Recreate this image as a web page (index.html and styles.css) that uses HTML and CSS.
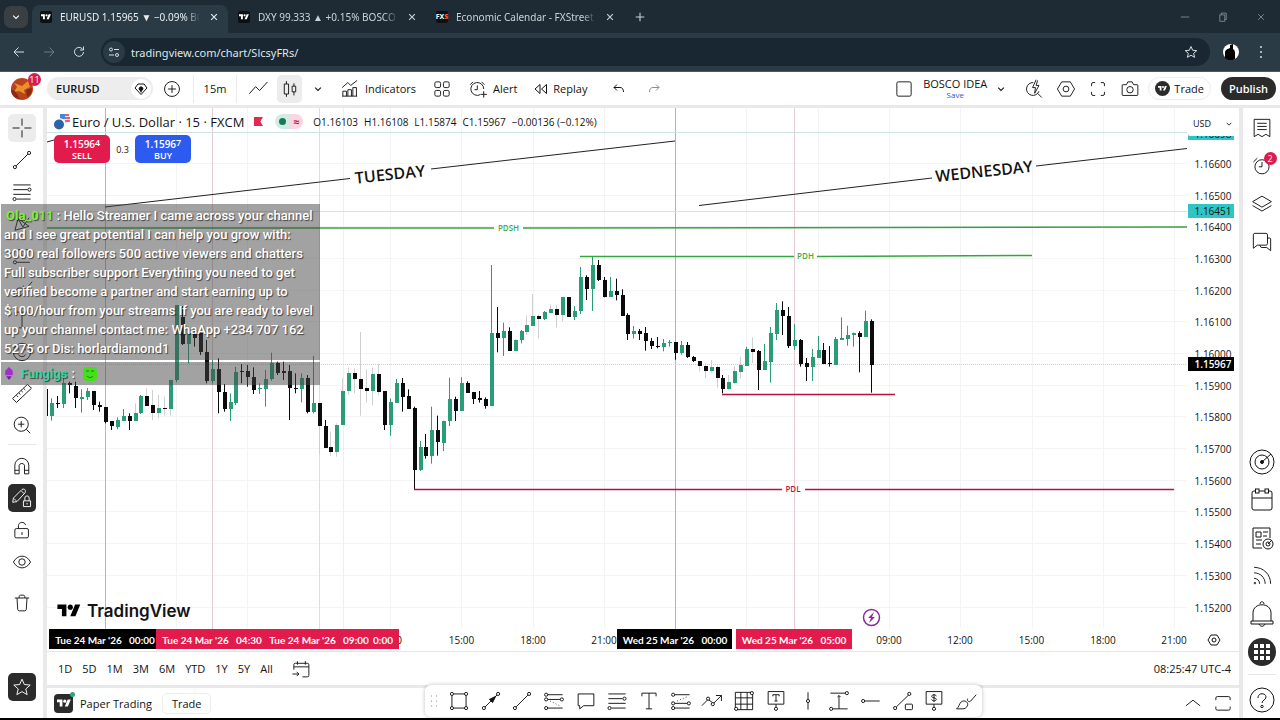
FILE: index.html
```html
<!DOCTYPE html>
<html lang="en">
<head>
    <meta charset="UTF-8">
    <meta name="viewport" content="width=device-width, initial-scale=1.0">
    <title>EURUSD 1.15965 ▼ −0.09% BOSCO IDEA</title>
    <link rel="stylesheet" href="styles.css">
</head>
<body>
    <!-- Icon sprite -->
    <svg class="sprite" aria-hidden="true">
        <symbol id="i-tv" viewBox="0 0 36 28"><path d="M14 22H7V11H0V4h14v18zM28 22h-8l7.500-18h8L28 22z" /><circle cx="20" cy="8" r="4" /></symbol>
        <symbol id="i-x" viewBox="0 0 28 28"><path d="M6 6l16 16M22 6L6 22" /></symbol>
        <symbol id="i-chev" viewBox="0 0 28 28"><path d="M6 10l8 8 8-8" /></symbol>
        <symbol id="i-up" viewBox="0 0 28 28"><path d="M4 18l10-8 10 8" /></symbol>
        <symbol id="i-plus" viewBox="0 0 28 28"><circle cx="14" cy="14" r="9.500" /><path d="M14 9v10M9 14h10" /></symbol>
        <symbol id="i-gem" viewBox="0 0 28 28"><path d="M2 12l6-8h12l6 8-12 13z" /><path d="M14 8v13M11 11h6l1 3-4 5-4-5z" fill="currentColor" /></symbol>
        <symbol id="i-line" viewBox="0 0 28 28"><path d="M3 20l8-9 5 5 10-11" /></symbol>
        <symbol id="i-candle" viewBox="0 0 28 28"><path d="M6 7h6v14H6zM9 3v4M9 21v4M17 10h5v8h-5zM19.500 6v4M19.500 18v5" /></symbol>
        <symbol id="i-ind" viewBox="0 0 28 28"><path d="M3 12l8-7 4 4 9-7M4 24v-7h5v7M11 24v-9h5v9M18 24V12h5v12M3 24h21" /></symbol>
        <symbol id="i-grid" viewBox="0 0 28 28"><rect x="4" y="4" width="8" height="8" rx="2" /><rect x="16" y="4" width="8" height="8" rx="2" /><rect x="4" y="16" width="8" height="8" rx="2" /><rect x="16" y="16" width="8" height="8" rx="2" /></symbol>
        <symbol id="i-alert" viewBox="0 0 28 28"><path d="M17 22a9 9 0 1 1 5-8M13 9v6H9M3 8l4-4M19 4l4 4M22 17v9M17.500 21.500h9" /></symbol>
        <symbol id="i-clock" viewBox="0 0 28 28"><circle cx="14" cy="15" r="9" /><path d="M14 9v6H10M3 9l5-5" /></symbol>
        <symbol id="i-replay" viewBox="0 0 28 28"><path d="M12 5v18L2 14zM25 5v18l-10-9z" /></symbol>
        <symbol id="i-undo" viewBox="0 0 28 28"><path d="M10 5l-6 6 6 6M4 11h12c5 0 7 4 7 9" /></symbol>
        <symbol id="i-redo" viewBox="0 0 28 28"><path d="M18 5l6 6-6 6M24 11H12c-5 0-7 4-7 9" /></symbol>
        <symbol id="i-square" viewBox="0 0 28 28"><rect x="4" y="4" width="20" height="20" rx="2" /></symbol>
        <symbol id="i-quick" viewBox="0 0 28 28"><path d="M13 5a9 9 0 1 0 8 12M19 20l6 6M17 1l-5 11h4l-1 8 6-11h-4l2-7" /></symbol>
        <symbol id="i-hex" viewBox="0 0 28 28"><path d="M8 4h12l6 10-6 10H8L2 14z" /><circle cx="14" cy="14" r="4" /></symbol>
        <symbol id="i-full" viewBox="0 0 28 28"><path d="M5 10V7a2 2 0 0 1 2-2h3M18 5h3a2 2 0 0 1 2 2v3M23 18v3a2 2 0 0 1-2 2h-3M10 23H7a2 2 0 0 1-2-2v-3" /></symbol>
        <symbol id="i-cam" viewBox="0 0 28 28"><path d="M4 8h5l2-4h6l2 4h5a1 1 0 0 1 1 1v13a1 1 0 0 1-1 1H4a1 1 0 0 1-1-1V9a1 1 0 0 1 1-1z" /><circle cx="14" cy="15" r="4.500" /></symbol>
        <symbol id="i-cross" viewBox="0 0 28 28"><path d="M14 2v9M14 17v9M2 14h9M17 14h9" /></symbol>
        <symbol id="i-trend" viewBox="0 0 28 28"><path d="M6.500 21.500L21.500 6.500" /><circle cx="5" cy="23" r="2" /><circle cx="23" cy="5" r="2" /></symbol>
        <symbol id="i-fib" viewBox="0 0 28 28"><path d="M3 5h22M3 11h18M3 17h22M7 23h18" /><circle cx="23.500" cy="11" r="2" /><circle cx="4.500" cy="23" r="2" /></symbol>
        <symbol id="i-pattern" viewBox="0 0 28 28"><path d="M5 22L9 7l6 11 8-12M5 22l18-5L9 7" /></symbol>
        <symbol id="i-proj" viewBox="0 0 28 28"><path d="M7 22h17" /><path d="M4 6h20M7 13h15" stroke-dasharray="3 2" /><circle cx="5" cy="22" r="2" /></symbol>
        <symbol id="i-brush" viewBox="0 0 28 28"><path d="M2 24c3-2 3-6 6-9 3-2 7-1 8 2s-2 7-6 7zM16 11c-1 3 2 5 4 3l7-8" /></symbol>
        <symbol id="i-text" viewBox="0 0 28 28"><path d="M5 8V4h18v4M14 4v20M10 24h8" /></symbol>
        <symbol id="i-smile" viewBox="0 0 28 28"><circle cx="14" cy="14" r="11" /><path d="M10 10v2M18 10v2M9 17c3 4 7 4 10 0" /></symbol>
        <symbol id="i-ruler" viewBox="0 0 28 28"><path d="M2 21L21 3l5 5L7 26zM7 17l2 2M10 14l2 2M13 11l2 2M16 8l2 2" /></symbol>
        <symbol id="i-zoom" viewBox="0 0 28 28"><circle cx="13" cy="13" r="9" /><path d="M19.500 19.500l5 5M13 9v8M9 13h8" /></symbol>
        <symbol id="i-magnet" viewBox="0 0 28 28"><path d="M4 25V13a9.500 9.500 0 0 1 19.500 0v12h-6V13a4 4 0 0 0-7.500 0v12zM4 20h6M17.500 20h6" /></symbol>
        <symbol id="i-penlock" viewBox="0 0 28 28"><path d="M1 20l1-6L14 2c4-2 6 2 4 5L7 19zM3 15l3 3M13 4l4 4M16 18h10v8H16zM18 18v-4a3 3 0 0 1 6 0v4M21 21v2" /></symbol>
        <symbol id="i-unlock" viewBox="0 0 28 28"><rect x="4" y="12" width="19" height="13" rx="2" /><path d="M9 12V8c0-6 9-6 10-1M14 17v4" /></symbol>
        <symbol id="i-eye" viewBox="0 0 28 28"><path d="M2 14C8 3 20 3 26 14 20 25 8 25 2 14z" /><circle cx="14" cy="14" r="4.500" /></symbol>
        <symbol id="i-trash" viewBox="0 0 28 28"><path d="M4 7h20M10 7V5c0-1 1-2 2-2h4c1 0 2 1 2 2v2M7 7l1 16c0 1 1 2 2 2h8c1 0 2-1 2-2l1-16" /></symbol>
        <symbol id="i-star" viewBox="0 0 28 28"><path d="M14 3l3.300 7.500 8.200.8-6.200 5.400 1.900 8-7.200-4.200-7.200 4.200 1.900-8-6.200-5.400 8.200-.8z" /></symbol>
        <symbol id="i-watch" viewBox="0 0 28 28"><path d="M4 3h20v22l-5-3-5 3-5-3-5 3zM8 8h12M8 12h12M8 16h12" /></symbol>
        <symbol id="i-layers" viewBox="0 0 28 28"><path d="M14 4l12 7-12 7-12-7zM2 16l12 7 12-7" /></symbol>
        <symbol id="i-chat" viewBox="0 0 28 28"><path d="M4 3h15a2 2 0 0 1 2 2v11a2 2 0 0 1-2 2H8l-5 4V5a2 2 0 0 1 1-2zM21 9h3a1 1 0 0 1 1 1v15l-5-4h-7l-2-3" /></symbol>
        <symbol id="i-target" viewBox="0 0 28 28"><circle cx="14" cy="14" r="12" /><circle cx="14" cy="14" r="7" /><circle cx="14" cy="14" r="1.500" fill="currentColor" /><path d="M14 14l9-8" /></symbol>
        <symbol id="i-cal" viewBox="0 0 28 28"><rect x="4" y="5" width="20" height="19" rx="2" /><path d="M4 12h20" /><rect x="7.500" y="3" width="3.500" height="4" fill="#fff" /><rect x="17" y="3" width="3.500" height="4" fill="#fff" /></symbol>
        <symbol id="i-news" viewBox="0 0 28 28"><path d="M14 24H5V4h17v10M8 8h5v5H8zM15 8h5M15 12h4M8 16h6M8 20h5" /><circle cx="20" cy="20" r="5" /><circle cx="20" cy="20" r="2" /><path d="M20 20l4-4" /></symbol>
        <symbol id="i-rss" viewBox="0 0 28 28"><path d="M4 3c12 0 21 9 21 21M4 10c8 0 14 6 14 14M4 17c4 0 7 3 7 7" /><circle cx="5" cy="23" r="1" /></symbol>
        <symbol id="i-bell" viewBox="0 0 28 28"><path d="M3 21h22v3H3zM5 21v-8c0-11 18-11 18 0v8M12 4c0-3 4-3 4 0M11 24c1 3 5 3 6 0" /></symbol>
        <symbol id="i-apps" viewBox="0 0 28 28"><path d="M6 6h4v4H6zM12 6h4v4h-4zM18 6h4v4h-4zM6 12h4v4H6zM12 12h4v4h-4zM18 12h4v4h-4zM6 18h4v4H6zM12 18h4v4h-4zM18 18h4v4h-4z" fill="currentColor" stroke="none" /></symbol>
        <symbol id="i-help" viewBox="0 0 28 28"><circle cx="14" cy="14" r="12" /><path d="M10 12c0-6 8-5 8-1 0 3-4 3-4 6" /><circle cx="14" cy="20.500" r="1.200" /></symbol>
        <symbol id="i-goto" viewBox="0 0 28 28"><path d="M4 15V8a2 2 0 0 1 2-2h17a2 2 0 0 1 2 2v15a2 2 0 0 1-2 2h-7M4 11h21M9 3v5M20 3v5M2 21h9M8 18l3 3-3 3" /></symbol>
        <symbol id="i-rect" viewBox="0 0 28 28"><path d="M6 5h16M6 23h16M5 6v16M23 6v16" /><circle cx="5" cy="5" r="2" fill="#fff" /><circle cx="23" cy="5" r="2" fill="#fff" /><circle cx="5" cy="23" r="2" fill="#fff" /><circle cx="23" cy="23" r="2" fill="#fff" /></symbol>
        <symbol id="i-arrow" viewBox="0 0 28 28"><path d="M6 22L22 6" /><path d="M12 12l8-4-4 8z" fill="currentColor" /><circle cx="5" cy="23" r="2" fill="#fff" /><circle cx="23" cy="5" r="2" fill="#fff" /></symbol>
        <symbol id="i-long" viewBox="0 0 28 28"><path d="M5 6h20M5 12h18M5 23h20" /><path d="M9 14l14 7" stroke-dasharray="1 3" /><circle cx="4" cy="6" r="2" fill="#fff" /><circle cx="4" cy="12" r="2" fill="#fff" /><circle cx="24" cy="12" r="2" fill="#fff" /><circle cx="4" cy="23" r="2" fill="#fff" /></symbol>
        <symbol id="i-short" viewBox="0 0 28 28"><path d="M5 6h20M5 17h18M5 23h20" /><path d="M9 14l14-6" stroke-dasharray="1 3" /><circle cx="4" cy="6" r="2" fill="#fff" /><circle cx="4" cy="17" r="2" fill="#fff" /><circle cx="24" cy="17" r="2" fill="#fff" /><circle cx="4" cy="23" r="2" fill="#fff" /></symbol>
        <symbol id="i-bubble" viewBox="0 0 28 28"><path d="M4 5h20v15H11l-5 4v-4H4z" /></symbol>
        <symbol id="i-path" viewBox="0 0 28 28"><path d="M1 20l8-8 7 5 10-10M19 7h7v7" /><circle cx="9" cy="11" r="2" fill="#fff" /><circle cx="15" cy="18" r="2" fill="#fff" /></symbol>
        <symbol id="i-table" viewBox="0 0 28 28"><path d="M3 3h22v22H3zM10 3v22M18 3v22M3 10h22M3 18h22" /><circle cx="24" cy="4" r="2" fill="#fff" /><circle cx="4" cy="24" r="2" fill="#fff" /></symbol>
        <symbol id="i-note" viewBox="0 0 28 28"><path d="M4 2h20v16H4zM10 8V6h8v2M14 6v8M12 14h4M14 18v4" /><circle cx="14" cy="24" r="2" /></symbol>
        <symbol id="i-vline" viewBox="0 0 28 28"><path d="M14 3v9M14 16v9" /><circle cx="14" cy="14" r="2" /></symbol>
        <symbol id="i-range" viewBox="0 0 28 28"><path d="M3 4h20M6 24h19M14 24V7M12 9l2-2 2 2" /><circle cx="24" cy="4" r="2" fill="#fff" /><circle cx="4" cy="24" r="2" fill="#fff" /></symbol>
        <symbol id="i-ray" viewBox="0 0 28 28"><path d="M6 14h19" /><circle cx="4" cy="14" r="2" /></symbol>
        <symbol id="i-trendsq" viewBox="0 0 28 28"><path d="M5.500 21.500L21 6.500" /><circle cx="4" cy="23" r="2" /><circle cx="22" cy="5" r="2" /><rect x="17" y="18" width="9" height="7" rx="1" /></symbol>
        <symbol id="i-price" viewBox="0 0 28 28"><path d="M4 2h20v16H4zM17 8c-1-3-6-2-6 0 0 3 6 1 6 4 0 2-5 3-6 0M14 5v10M14 18v4" /><circle cx="14" cy="24" r="2" /></symbol>
        <symbol id="i-max" viewBox="0 0 28 28"><path d="M4 10V7a2 2 0 0 1 2-2h16a2 2 0 0 1 2 2v3M4 19v3a2 2 0 0 0 2 2h16a2 2 0 0 0 2-2v-3" /></symbol>
    </svg>

    <!-- Browser -->
    <div class="tab-strip">
        <button class="tab-search" aria-label="Search tabs"><svg class="icon tiny"><use href="#i-chev" /></svg></button>
        <div class="tab active">
            <span class="favicon"><svg><use href="#i-tv" /></svg></span>
            <span class="tab-title">EURUSD 1.15965 ▼ −0.09% BOSCO</span>
            <button class="tab-close" aria-label="Close tab"><svg class="icon tiny"><use href="#i-x" /></svg></button>
        </div>
        <div class="tab">
            <span class="favicon"><svg><use href="#i-tv" /></svg></span>
            <span class="tab-title">DXY 99.333 ▲ +0.15% BOSCO I</span>
            <button class="tab-close" aria-label="Close tab"><svg class="icon tiny"><use href="#i-x" /></svg></button>
        </div>
        <div class="tab">
            <span class="favicon fxs">FX<b>S</b></span>
            <span class="tab-title">Economic Calendar - FXStreet</span>
            <button class="tab-close" aria-label="Close tab"><svg class="icon tiny"><use href="#i-x" /></svg></button>
        </div>
        <button class="new-tab" aria-label="New tab"><svg class="icon tiny" viewBox="0 0 28 28"><path d="M14 2v24M2 14h24" /></svg></button>
        <div class="window-buttons">
            <button aria-label="Minimize"><svg class="icon tiny" viewBox="0 0 28 28"><path d="M2 14h24" /></svg></button>
            <button aria-label="Restore"><svg class="icon tiny" viewBox="0 0 28 28"><path d="M5 8h14v18H5zM9 8V3h14v18h-4" /></svg></button>
            <button aria-label="Close"><svg class="icon tiny"><use href="#i-x" /></svg></button>
        </div>
    </div>
    <div class="address-bar">
        <button aria-label="Back"><svg class="icon small" viewBox="0 0 28 28"><path d="M24 14H4M13 5l-9 9 9 9" /></svg></button>
        <button class="off" aria-label="Forward"><svg class="icon small" viewBox="0 0 28 28"><path d="M4 14h20M15 5l9 9-9 9" /></svg></button>
        <button aria-label="Reload"><svg class="icon small" viewBox="0 0 28 28"><path d="M23 14a9 9 0 1 1-3-7l3 3M23 3v7h-7" /></svg></button>
        <div class="url-box">
            <span class="site-info"><svg class="icon small" viewBox="0 0 28 28"><circle cx="8" cy="9" r="3" /><path d="M14 9h10M4 20h10" /><circle cx="20" cy="20" r="3" /></svg></span>
            <input class="url" type="text" aria-label="Address" value="tradingview.com/chart/SlcsyFRs/">
            <button aria-label="Bookmark"><svg class="icon small"><use href="#i-star" /></svg></button>
        </div>
        <button class="profile" aria-label="Profile"><svg viewBox="0 0 16 16"><circle cx="8" cy="8" r="8" fill="#fff" /><path d="M2 14V8c1-3 3-3 5-4V1l3-1v5c2 1 2 3 2 5v5c-3 2-7 2-10-1z" fill="#000" /></svg></button>
        <button class="menu" aria-label="Menu"><svg viewBox="0 0 4 14"><circle cx="2" cy="2" r="1" /><circle cx="2" cy="7" r="1" /><circle cx="2" cy="12" r="1" /></svg></button>
    </div>

    <!-- Top toolbar -->
    <header class="top-bar">
        <button class="avatar" aria-label="Account"><svg viewBox="0 0 22 22"><circle cx="11" cy="11" r="11" fill="#b8431c" /><path d="M3 5l8 3 6-5 2 6-6 3 1 4-6-3-5 1 3-5z" fill="#e8902c" /><path d="M0 12c5-1 6 5 9 9-5 0-9-4-9-9zM15 12l6-2c0 5-2 8-5 9z" fill="#8a2a14" /></svg><span class="badge">11</span></button>
        <button class="symbol">EURUSD <span class="gem"><svg class="icon small"><use href="#i-gem" /></svg></span></button>
        <button class="tool" aria-label="Compare"><svg class="icon big"><use href="#i-plus" /></svg></button>
        <button class="tool text">15m</button>
        <button class="tool" aria-label="Line"><svg class="icon big"><use href="#i-line" /></svg></button>
        <button class="tool narrow pressed" aria-label="Candles"><svg class="icon"><use href="#i-candle" /></svg></button>
        <button class="tool narrow" aria-label="Chart types"><svg class="icon tiny"><use href="#i-chev" /></svg></button>
        <button class="tool wide"><svg class="icon"><use href="#i-ind" /></svg>Indicators</button>
        <button class="tool" aria-label="Layouts"><svg class="icon"><use href="#i-grid" /></svg></button>
        <button class="tool wide"><svg class="icon"><use href="#i-alert" /></svg>Alert</button>
        <button class="tool wide"><svg class="icon small"><use href="#i-replay" /></svg>Replay</button>
        <button class="tool undo" aria-label="Undo"><svg class="icon small"><use href="#i-undo" /></svg></button>
        <button class="tool off" aria-label="Redo"><svg class="icon small"><use href="#i-redo" /></svg></button>
        <div class="top-right">
            <button class="tool" aria-label="Layout setup"><svg class="icon"><use href="#i-square" /></svg></button>
            <button class="layout-name">BOSCO IDEA<span>Save</span></button>
            <button class="tool narrow manage" aria-label="Manage layouts"><svg class="icon tiny"><use href="#i-chev" /></svg></button>
            <button class="tool" aria-label="Quick search"><svg class="icon"><use href="#i-quick" /></svg></button>
            <button class="tool" aria-label="Settings"><svg class="icon"><use href="#i-hex" /></svg></button>
            <button class="tool" aria-label="Fullscreen"><svg class="icon"><use href="#i-full" /></svg></button>
            <button class="tool" aria-label="Snapshot"><svg class="icon"><use href="#i-cam" /></svg></button>
            <button class="trade"><span><svg><use href="#i-tv" /></svg></span>Trade</button>
            <button class="publish">Publish</button>
        </div>
    </header>

    <div class="workspace">
        <nav class="side left">
            <div class="group">
                <button class="pressed" aria-label="Cross"><svg class="icon big"><use href="#i-cross" /></svg></button>
                <button aria-label="Trend line"><svg class="icon big"><use href="#i-trend" /></svg></button>
                <button aria-label="Fib retracement"><svg class="icon big"><use href="#i-fib" /></svg></button>
                <button aria-label="Patterns"><svg class="icon big"><use href="#i-pattern" /></svg></button>
                <button aria-label="Projection"><svg class="icon big"><use href="#i-proj" /></svg></button>
                <button aria-label="Brush"><svg class="icon big"><use href="#i-brush" /></svg></button>
                <button aria-label="Text"><svg class="icon big"><use href="#i-text" /></svg></button>
                <button aria-label="Icons"><svg class="icon big"><use href="#i-smile" /></svg></button>
            </div>
            <div class="group">
                <button aria-label="Measure"><svg class="icon big"><use href="#i-ruler" /></svg></button>
                <button aria-label="Zoom in"><svg class="icon big"><use href="#i-zoom" /></svg></button>
            </div>
            <div class="group ruled">
                <button aria-label="Magnet"><svg class="icon"><use href="#i-magnet" /></svg></button>
                <button class="dark" aria-label="Keep drawing"><svg class="icon"><use href="#i-penlock" /></svg></button>
                <button aria-label="Lock drawings"><svg class="icon"><use href="#i-unlock" /></svg></button>
                <button aria-label="Hide drawings"><svg class="icon"><use href="#i-eye" /></svg></button>
            </div>
            <div class="group">
                <button aria-label="Remove"><svg class="icon"><use href="#i-trash" /></svg></button>
            </div>
            <button class="dark favorites" aria-label="Favorites"><svg class="icon"><use href="#i-star" /></svg></button>
        </nav>

        <main class="center">
            <section class="chart">
                <div class="plot">
                    <svg id="pane" class="pane" role="img" aria-label="EURUSD 15 minute candles"></svg>
                    <div class="legend">
                        <svg class="flags" viewBox="0 0 16 16"><circle cx="11" cy="5" r="5" fill="#e8eaf2" /><path d="M10 1h5M11 4h5M11 7h5" stroke="#d8344c" stroke-width="1.500" /><path d="M6 0h5v5H6z" fill="#4a86d8" /><circle cx="5" cy="10" r="6" fill="#fff" /><circle cx="5" cy="10.500" r="5" fill="#2c62a8" /></svg>
                        <span class="name">Euro / U.S. Dollar · 15 · FXCM</span>
                        <svg class="flag" viewBox="0 0 10 10"><path d="M0 0h10L7 5l3 5H0z" fill="#e6284f" /></svg>
                        <span class="status"><i></i><b>≈</b></span>
                        <span class="ohlc"><span>O1.16103</span><span>H1.16108</span><span>L1.15874</span><span>C1.15967</span><span>−0.00136 (−0.12%)</span></span>
                    </div>
                    <div class="order-buttons">
                        <button class="sell">1.1596<sup>4</sup><span>SELL</span></button>
                        <span class="spread">0.3</span>
                        <button class="buy">1.1596<sup>7</sup><span>BUY</span></button>
                    </div>
                    <div class="brand"><svg><use href="#i-tv" /></svg>TradingView</div>
                </div>
                <div class="scale">
                    <button class="currency">USD<svg class="icon tiny"><use href="#i-chev" /></svg></button>
                    <svg id="prices" class="prices"></svg>
                    <button class="scale-settings" aria-label="Scale settings"><svg class="icon small"><use href="#i-hex" /></svg></button>
                </div>
            </section>
            <div class="ranges">
                <button>1D</button><button>5D</button><button>1M</button><button>3M</button><button>6M</button><button>YTD</button><button>1Y</button><button>5Y</button><button>All</button>
                <button class="goto" aria-label="Go to date"><svg class="icon"><use href="#i-goto" /></svg></button>
                <span class="clock">08:25:47 UTC-4</span>
            </div>
            <footer class="broker">
                <span class="broker-logo"><svg><use href="#i-tv" /></svg></span>
                <button>Paper Trading</button>
                <button class="outlined">Trade</button>
                <div class="panel-buttons">
                    <button aria-label="Open panel"><svg class="icon"><use href="#i-up" /></svg></button>
                    <button aria-label="Maximize panel"><svg class="icon"><use href="#i-max" /></svg></button>
                </div>
            </footer>
        </main>

        <nav class="side right">
            <button aria-label="Watchlist"><svg class="icon big"><use href="#i-watch" /></svg></button>
            <button aria-label="Alerts"><svg class="icon big"><use href="#i-clock" /></svg><span class="badge">2</span></button>
            <button aria-label="Object tree"><svg class="icon big"><use href="#i-layers" /></svg></button>
            <button aria-label="Chats"><svg class="icon big"><use href="#i-chat" /></svg></button>
            <button class="lower" aria-label="Screeners"><svg class="icon full"><use href="#i-target" /></svg></button>
            <button aria-label="Calendars"><svg class="icon full"><use href="#i-cal" /></svg></button>
            <button aria-label="News"><svg class="icon full"><use href="#i-news" /></svg></button>
            <button aria-label="Ideas"><svg class="icon big"><use href="#i-rss" /></svg></button>
            <button aria-label="Notifications"><svg class="icon full"><use href="#i-bell" /></svg></button>
            <button class="dark round" aria-label="Products"><svg class="icon full"><use href="#i-apps" /></svg></button>
            <button class="help" aria-label="Help"><svg class="icon full"><use href="#i-help" /></svg></button>
        </nav>
    </div>

    <!-- Favorite drawing tools -->
    <div class="drawing-bar">
        <svg class="grip" viewBox="0 0 8 12"><path d="M1 1h1M6 1h1M1 6h1M6 6h1M1 11h1M6 11h1" /></svg>
        <button aria-label="Rectangle"><svg class="icon big"><use href="#i-rect" /></svg></button>
        <button aria-label="Arrow"><svg class="icon big"><use href="#i-arrow" /></svg></button>
        <button aria-label="Trend line"><svg class="icon big"><use href="#i-trend" /></svg></button>
        <button aria-label="Short position"><svg class="icon big"><use href="#i-long" /></svg></button>
        <button aria-label="Callout"><svg class="icon big"><use href="#i-bubble" /></svg></button>
        <button aria-label="Fib retracement"><svg class="icon big"><use href="#i-fib" /></svg></button>
        <button aria-label="Text"><svg class="icon big"><use href="#i-text" /></svg></button>
        <button aria-label="Long position"><svg class="icon big"><use href="#i-short" /></svg></button>
        <button aria-label="Path"><svg class="icon big"><use href="#i-path" /></svg></button>
        <button aria-label="Table"><svg class="icon big"><use href="#i-table" /></svg></button>
        <button aria-label="Note"><svg class="icon big"><use href="#i-note" /></svg></button>
        <button aria-label="Vertical line"><svg class="icon big"><use href="#i-vline" /></svg></button>
        <button aria-label="Price range"><svg class="icon big"><use href="#i-range" /></svg></button>
        <button aria-label="Horizontal ray"><svg class="icon big"><use href="#i-ray" /></svg></button>
        <button aria-label="Info line"><svg class="icon big"><use href="#i-trendsq" /></svg></button>
        <button aria-label="Price note"><svg class="icon big"><use href="#i-price" /></svg></button>
        <button aria-label="Brush"><svg class="icon big"><use href="#i-brush" /></svg></button>
    </div>

    <!-- Stream chat -->
    <div class="stream-chat">
        <p><b class="user green">Ola_011</b> : Hello Streamer I came across your channel<br>and I see great potential I can help you grow with:<br>3000 real followers 500 active viewers and chatters<br>Full subscriber support Everything you need to get<br>verified become a partner and start earning up to<br>$100/hour from your streams If you are ready to level<br>up your channel contact me: WhaApp +234 707 162<br>5275 or Dis: horlardiamond1</p>
        <p class="second"><svg class="gem-badge" viewBox="0 0 10 14"><path d="M5 0l4 4v5H1V4z" fill="#a42cd0" /><path d="M2 10h6l-3 4z" fill="#7a1a9c" /></svg><b class="user teal">Fungigs</b> : <svg class="emote" viewBox="0 0 14 14"><rect width="14" height="14" rx="4" fill="#45e01c" /><path d="M3 4h3M8 4h3M4 9c2 2 4 2 6 0" fill="none" stroke="#1c7a10" /></svg></p>
    </div>

    <script src="chart.js"></script>
</body>
</html>
```

FILE: styles.css
```css
:root {
    --frame: #1f2b34;
    --frame-active: #2b3b45;
    --url: #182731;
    --ink: #131313;
    --gap: #e9e9eb;
    --red: #e21b4d;
    --blue: #2d5bf0;
    --dark: #2b2b2b;
}

* {
    box-sizing: border-box;
}

body {
    margin: 0;
    height: 100vh;
    display: flex;
    flex-direction: column;
    position: relative;
    overflow: hidden;
    background: #fff;
    border-bottom: 2px solid #000;
    color: var(--ink);
    font-family: "Open Sans", "Noto Sans", sans-serif;
    font-size: 11px;
}

button {
    display: flex;
    align-items: center;
    justify-content: center;
    flex: none;
    margin: 0;
    padding: 0;
    border: none;
    background: none;
    color: inherit;
    font: inherit;
    white-space: nowrap;
    cursor: pointer;
}

.sprite {
    position: absolute;
    width: 0;
    height: 0;
}

.icon {
    width: 20px;
    height: 20px;
    flex: none;
    fill: none;
    stroke: currentColor;
    stroke-width: 1.3;
}

.icon.tiny {
    width: 10px;
    height: 10px;
    stroke-width: 3;
}

.icon.small {
    width: 14px;
    height: 14px;
    stroke-width: 2;
}

.icon.big {
    width: 22px;
    height: 22px;
    stroke-width: 1.2;
}

.icon.full {
    width: 28px;
    height: 28px;
    stroke-width: 1;
}

.badge {
    position: absolute;
    top: 0;
    right: 0;
    min-width: 13px;
    height: 13px;
    border-radius: 7px;
    background: #d81f4c;
    color: #fff;
    font-size: 9px;
    line-height: 13px;
    text-align: center;
}

/* Browser tabs */
.tab-strip {
    height: 33px;
    flex: none;
    display: flex;
    gap: 2px;
    background: var(--frame);
    color: #c9d3d9;
    font-family: "Noto Sans", sans-serif;
    font-size: 10px;
}

.tab-search {
    width: 24px;
    height: 22px;
    margin: 6px 2px 6px 4px;
    border-radius: 7px;
    background: #3a3f43;
    color: #fff;
}

.tab {
    width: 196px;
    display: flex;
    align-items: center;
    gap: 8px;
    padding: 0 8px;
    border-radius: 8px 8px 0 0;
}

.tab.active {
    margin-top: 5px;
    padding-bottom: 5px;
    background: var(--frame-active);
    color: #e8eef1;
}

.favicon {
    width: 12px;
    height: 12px;
    flex: none;
    display: flex;
    align-items: center;
    justify-content: center;
    border-radius: 2px;
    background: #0b1014;
}

.favicon svg {
    width: 10px;
    height: 8px;
    fill: #fff;
}

.fxs {
    background: #101010;
    color: #fff;
    font-size: 7px;
    font-weight: 700;
}

.fxs b {
    color: #ee5a33;
}

.tab-title {
    flex: 1;
    overflow: hidden;
    white-space: nowrap;
    -webkit-mask-image: linear-gradient(90deg, #000 90%, transparent);
    mask-image: linear-gradient(90deg, #000 90%, transparent);
}

.tab-close {
    width: 12px;
}

.new-tab {
    width: 28px;
}

.window-buttons {
    margin-left: auto;
    display: flex;
}

.window-buttons button {
    width: 38px;
    color: #9aa5ac;
}

.window-buttons .icon {
    stroke-width: 2;
}

.address-bar {
    height: 39px;
    flex: none;
    display: flex;
    align-items: center;
    padding: 0 4px;
    background: var(--frame-active);
    border-bottom: 1px solid #4a5a64;
    color: #d5dee3;
}

.address-bar > button {
    width: 30px;
    height: 30px;
}

.address-bar .off {
    color: #6d7b84;
}

.url-box {
    flex: 1;
    height: 28px;
    display: flex;
    align-items: center;
    gap: 6px;
    margin: 0 6px 0 7px;
    padding: 0 12px 0 2px;
    border-radius: 14px;
    background: var(--url);
}

.site-info {
    width: 22px;
    height: 22px;
    display: flex;
    align-items: center;
    justify-content: center;
    border-radius: 50%;
    background: #2b3b45;
}

.url {
    flex: 1;
    border: none;
    outline: none;
    padding: 0;
    background: none;
    color: #dfe6ea;
    font: 11px "Noto Sans", sans-serif;
}

.profile svg {
    width: 16px;
    height: 16px;
}

.menu svg {
    width: 4px;
    height: 14px;
    fill: #d5dee3;
}

/* Top toolbar */
.top-bar {
    height: 36px;
    flex: none;
    display: flex;
    align-items: center;
    gap: 3px;
    padding-right: 4px;
    border-bottom: 3px solid var(--gap);
}

.avatar {
    position: relative;
    width: 44px;
    height: 32px;
}

.avatar svg {
    width: 22px;
    height: 22px;
}

.avatar .badge {
    right: 3px;
}

.symbol {
    width: 106px;
    height: 23px;
    justify-content: space-between;
    padding: 0 2px 0 9px;
    border-radius: 12px;
    background: #ededee;
    font-weight: 600;
}

.gem {
    width: 20px;
    height: 20px;
    display: flex;
    align-items: center;
    justify-content: center;
    border-radius: 50%;
    background: #fff;
}

.tool {
    width: 32px;
    height: 28px;
    font-weight: 500;
}

.tool.text {
    width: 44px;
    margin: 0 2px;
    border-left: 1px solid #ebebeb;
    border-right: 1px solid #ebebeb;
}

.tool.narrow {
    width: 25px;
}

.tool.pressed,
.side .pressed {
    border-radius: 5px;
    background: #ececec;
}

.tool.wide {
    width: auto;
    gap: 5px;
    padding: 0 7px;
}

.tool.undo {
    margin-left: 6px;
}

.tool.off {
    color: #8c8c8c;
}

.top-right {
    margin-left: auto;
    display: flex;
    align-items: center;
}

.layout-name {
    flex-direction: column;
    margin: 0 1px 0 3px;
    line-height: 12px;
}

.layout-name span {
    color: #3f51c9;
    font-size: 8px;
    line-height: 9px;
}

.tool.manage {
    margin-right: 5px;
}

.trade {
    height: 23px;
    gap: 4px;
    margin: 0 10px 0 2px;
    padding: 0 6px;
    border: 1px solid #ececec;
    border-radius: 12px;
    font-weight: 500;
}

.trade span {
    width: 15px;
    height: 15px;
    display: flex;
    align-items: center;
    justify-content: center;
    border-radius: 50%;
    background: var(--dark);
}

.trade svg {
    width: 9px;
    height: 7px;
    fill: #fff;
}

.publish {
    height: 23px;
    padding: 0 8px;
    border-radius: 12px;
    background: var(--dark);
    color: #fff;
    font-weight: 600;
}

/* Workspace */
.workspace {
    flex: 1;
    min-height: 0;
    display: flex;
}

.side {
    flex: none;
    display: flex;
    flex-direction: column;
    align-items: center;
}

.side button {
    position: relative;
    width: 28px;
    height: 28px;
}

.side .dark {
    border-radius: 5px;
    background: var(--dark);
    color: #fff;
}

.side .round {
    border-radius: 50%;
}

.left {
    width: 47px;
    gap: 13px;
    padding: 6px 0 17px;
    border-right: 4px solid var(--gap);
}

.group {
    position: relative;
    display: flex;
    flex-direction: column;
    gap: 4px;
}

.ruled::before,
.help::before {
    content: "";
    position: absolute;
    top: -8px;
    left: 0;
    width: 28px;
    height: 1px;
    background: #e6e6e6;
}

.favorites {
    margin-top: auto;
}

.right {
    width: 41px;
    gap: 10px;
    padding: 6px 0 4px;
    border-left: 4px solid var(--gap);
}

.right .lower {
    margin-top: auto;
}

.right .help {
    margin-top: 10px;
}

.help::before {
    top: -12px;
}

.right .badge {
    right: -1px;
}

.center {
    flex: 1;
    min-width: 0;
    display: flex;
    flex-direction: column;
}

.chart {
    flex: 1;
    min-height: 0;
    display: flex;
    border-bottom: 1px solid #e6e6e6;
}

.plot {
    flex: 1;
    min-width: 0;
    position: relative;
}

.pane {
    position: absolute;
    width: 100%;
    height: 100%;
    font-size: 10px;
}

.pane .day {
    font-size: 16px;
    font-weight: 600;
}

.pane .label {
    font-size: 8px;
    font-weight: 600;
}

.pane .tag {
    fill: #fff;
    font-family: Lato, sans-serif;
    font-weight: 700;
    white-space: pre;
}

.legend {
    position: relative;
    height: 27px;
    display: flex;
    align-items: center;
    padding-left: 7px;
}

.flags {
    width: 16px;
    height: 16px;
    margin-right: 2px;
}

.name {
    font-size: 13px;
}

.flag {
    width: 9px;
    height: 9px;
    margin: 0 12px 0 10px;
}

.status {
    width: 28px;
    height: 15px;
    display: flex;
    align-items: center;
    justify-content: space-around;
    margin-right: 10px;
    border-radius: 8px;
    background: linear-gradient(90deg, #d3ece3 50%, #fbd6e2 50%);
    color: #c21f52;
}

.status i {
    width: 7px;
    height: 7px;
    border-radius: 50%;
    background: #17785a;
}

.ohlc {
    display: flex;
    gap: 6px;
    font-size: 10px;
}

.order-buttons {
    position: relative;
    width: 151px;
    display: flex;
    align-items: center;
    justify-content: space-between;
    padding-left: 7px;
    box-sizing: content-box;
    width: 137px;
}

.sell,
.buy {
    width: 56px;
    height: 28px;
    flex-wrap: wrap;
    align-content: center;
    border-radius: 5px;
    background: var(--red);
    color: #fff;
    font-size: 10px;
    font-weight: 600;
    line-height: 12px;
}

.buy {
    background: var(--blue);
}

.sell sup,
.buy sup {
    font-size: 9px;
    line-height: 8px;
    margin-bottom: 2px;
}

.sell span,
.buy span {
    width: 100%;
    font-size: 9px;
    line-height: 11px;
}

.spread {
    font-size: 9px;
}

.brand {
    position: absolute;
    left: 10px;
    bottom: 29px;
    display: flex;
    align-items: center;
    gap: 6px;
    font: 600 17px/22px Inter, sans-serif;
}

.brand svg {
    width: 24px;
    height: 18px;
}

.scale {
    position: relative;
    width: 52px;
    flex: none;
}

.prices {
    position: absolute;
    top: 0;
    left: 0;
    width: 100%;
    height: 100%;
    font-size: 10px;
}

.prices .now {
    fill: #fff;
    font-weight: 600;
}

.currency {
    position: relative;
    z-index: 1;
    width: 52px;
    height: 25px;
    gap: 14px;
    margin-top: 3px;
    border-radius: 4px;
    background: #fff;
    font-size: 9px;
}

.currency .icon {
    width: 8px;
    height: 8px;
}

.scale-settings {
    position: absolute;
    right: 18px;
    bottom: 4px;
}

.ranges {
    height: 36px;
    flex: none;
    display: flex;
    align-items: center;
    gap: 10px;
    padding: 0 8px 0 11px;
    border-bottom: 3px solid var(--gap);
}

.goto {
    margin-left: 8px;
}

.clock {
    margin-left: auto;
}

.broker {
    height: 30px;
    flex: none;
    display: flex;
    align-items: center;
    padding-left: 7px;
}

.broker-logo {
    position: relative;
    width: 19px;
    height: 19px;
    display: flex;
    align-items: center;
    justify-content: center;
    margin-right: 7px;
    border-radius: 4px;
    background: var(--dark);
}

.broker-logo::after {
    content: "";
    position: absolute;
    top: -2px;
    right: -2px;
    width: 5px;
    height: 5px;
    border-radius: 50%;
    background: #2ea583;
}

.broker-logo svg {
    width: 14px;
    height: 11px;
    fill: #fff;
}

.outlined {
    height: 21px;
    margin-left: 10px;
    padding: 0 9px;
    border: 1px solid #ececec;
    border-radius: 5px;
}

.panel-buttons {
    margin-left: auto;
    display: flex;
    gap: 10px;
    padding-right: 6px;
}

.drawing-bar {
    position: absolute;
    left: 425px;
    bottom: 1px;
    width: 557px;
    height: 32px;
    display: flex;
    align-items: center;
    border-radius: 6px;
    background: #fff;
    box-shadow: 0 0 4px rgba(0, 0, 0, 0.25);
}

.drawing-bar button {
    flex: 1;
}

.grip {
    width: 8px;
    height: 12px;
    margin: 0 5px;
    stroke: #8a8a8a;
}

/* Stream chat */
.stream-chat {
    position: absolute;
    top: 204px;
    left: 1px;
    width: 319px;
    color: #fff;
    font: 500 13px/19px Roboto, sans-serif;
    text-shadow: 1px 1px 1px rgba(0, 0, 0, 0.6);
    white-space: nowrap;
}

.stream-chat p {
    margin: 0 0 2px;
    padding: 2px 3px;
    background: rgba(70, 70, 70, 0.5);
}

.stream-chat .second {
    display: flex;
    align-items: center;
    gap: 4px;
}

.user.green {
    margin-left: 2px;
    color: #7cf03c;
}

.user.teal {
    color: #2fd6a4;
}

.gem-badge {
    width: 10px;
    height: 13px;
    margin-right: 3px;
}

.emote {
    width: 14px;
    height: 14px;
    margin-left: 4px;
}
```

FILE: chart.js
```js
const NS = 'http://www.w3.org/2000/svg';
const GREEN = '#2a9d78';
const BLACK = '#0b0b0b';
const STEP = 5.94;

// Each row: colour (g / b), high, top, bottom, low in thirds of a pixel below `y`.
// A trailing 1 marks a pale wick.
const segments = [
    { x: 45.9, y: 100, rows: `
b 868 868 948 948|g 895 909 948 962|b 888 909 913 924|g 830 850 913 924|b 845 850 856 880|b 845 857 895 924|g 868 890 896 938|g 864 873 891 900|b 873 873 915 930|b 905 915 922 935
b 922 922 966 970|b 963 963 978 990|g 952 959 980 988|g 927 947 962 962|b 940 947 963 990|g 910 938 963 963 1|g 885 888 938 942|b 865 888 918 918 1|b 870 916 940 960 1|g 885 924 940 955 1
b 890 924 928 947 1|g 838 840 927 947 1|g 615 615 840 847|b 618 650 732 735|g 680 700 732 790|b 690 698 714 740|b 698 700 757 765|b 720 757 842 850|g 780 806 842 850|b 775 806 876 940
b 852 875 927 935|g 880 906 927 963|g 800 815 908 915|b 792 813 817 850|b 795 813 831 860|b 802 830 870 882|g 850 864 868 882|g 810 838 866 920|g 758 789 838 842|b 785 788 818 825
b 785 812 818 840|b 795 812 864 960|b 820 863 867 880|g 820 834 866 907|b 825 834 936 940|g 768 909 936 940|b 909 909 978 1063 1` },
    { x: 325, y: 130, rows: `
b 870 888 954 954|b 905 951 966 978 1|g 880 884 966 980 1|g 745 782 885 885 1|g 712 729 783 795 1|b 715 729 747 790 1|b 606 747 776 857 1|b 718 774 782 818 1|g 712 731 782 825 1|b 702 731 786 795 1
b 783 783 884 900|g 805 815 884 917|g 747 759 818 818|b 744 759 800 845|b 778 797 836 836|b 830 833 1020 1078|g 933 950 1020 1023|b 912 950 978 986|g 830 899 977 1001|b 857 899 937 977
g 872 872 938 963|g 743 806 873 888|b 800 806 842 873|g 742 759 842 842|b 754 759 788 788|b 786 786 806 822|b 783 803 809 818|b 802 806 828 836|g 405 609 828 828|b 531 609 624 667
g 578 603 624 678|b 592 603 662 662|g 629 629 662 662|g 600 603 630 640|g 556 585 606 615 1|g 492 558 588 588 1|b 553 558 567 626 1|g 543 546 567 570|g 523 538 548 550 1|b 526 538 554 592 1
g 501 501 554 574 1|b 501 501 560 560|g 528 543 560 570|g 411 440 543 552|b 436 440 477 510|g 380 404 477 543|b 390 404 451 453|b 441 450 500 502|g 441 483 500 500|b 446 483 495 511
b 478 494 557 557|b 550 556 612 630|g 588 603 612 626|b 597 603 612 630|b 591 610 633 662|b 624 632 648 657|b 621 647 651 655|g 627 638 651 664|g 630 636 638 650|b 636 636 669 689
g 633 645 669 674|b 636 645 681 684|b 678 681 693 696|b 693 693 709 725 1|b 700 708 723 745 1|g 690 711 723 728 1|b 708 711 745 774 1|b 735 743 777 790|g 735 756 777 780 1|g 708 723 758 762 1
g 680 705 726 745 1|g 650 657 708 708|b 622 657 666 700 1|b 660 663 720 780|g 642 693 720 720|g 591 609 696 758|g 519 540 612 630|b 514 540 559 615|b 531 558 648 654|g 582 629 648 660
b 627 629 702 710|b 684 699 711 753|g 657 681 711 753|g 618 660 684 684|b 639 660 702 702|b 648 699 703 710|g 621 627 704 704|g 562 624 630 630|g 587 615 626 647|g 608 610 614 650
b 604 608 621 727|g 542 573 621 621|b 568 572 704 788` }
];

function add(parent, tag, attrs, text) {
    const el = document.createElementNS(NS, tag);
    for (const key in attrs) el.setAttribute(key, attrs[key]);
    if (text !== undefined) el.textContent = text;
    parent.appendChild(el);
    return el;
}

function line(g, x1, y1, x2, y2, stroke, width = 1) {
    return add(g, 'line', { x1, y1, x2, y2, stroke, 'stroke-width': width });
}

function label(g, x, y, text, cls = '', fill = '#131313') {
    return add(g, 'text', { x, y, 'text-anchor': 'middle', class: cls, fill }, text);
}

// Everything below is plotted in window coordinates
const pane = add(document.getElementById('pane'), 'g', { transform: 'translate(-47 -108)' });
const scale = add(document.getElementById('prices'), 'g', { transform: 'translate(-1187 -108)' });

// Grid
for (let i = 0; i < 15; i++) {
    const y = Math.round(163 + i * 31.68) + 0.5;
    line(pane, 47, y, 1187, y, '#f4f4f4');
    label(scale, 1213, y + 4, (1.166 - i * 0.001).toFixed(5));
}
for (let x = 176; x < 1187; x += 71.3) {
    line(pane, Math.round(x) + 0.5, 108, Math.round(x) + 0.5, 628, '#f3f3f3');
}

// Session and price lines
[[105.5, '#bcb4b7'], [212.5, '#e3ccd2'], [319.5, '#e6dadd'], [343.5, '#f0eff0'], [675.5, '#b4b4b4'], [794.5, '#e6ccd3']]
    .forEach(([x, colour]) => line(pane, x, 108, x, 630, colour));
line(pane, 47, 132.5, 1187, 132.5, '#cfe3e5');
line(pane, 47, 211.5, 1187, 211.5, '#d4e3e6');
line(pane, 47, 364.5, 1187, 364.5, '#d0d0d0').setAttribute('stroke-dasharray', '1 1');

// Candles
segments.forEach(seg => {
    seg.rows.trim().split(/[|\n]/).forEach((row, i) => {
        const [dir, high, top, bottom, low, pale] = row.split(' ');
        const x = Math.round(seg.x + i * STEP - 0.5);
        const y = v => seg.y + v / 3;
        const colour = dir === 'g' ? GREEN : BLACK;
        line(pane, x + 0.5, y(high), x + 0.5, y(low), pale ? '#cfcfcf' : colour);
        add(pane, 'rect', {
            x: x - 1, y: Math.round(y(top)), width: 4,
            height: Math.max(1, Math.round(y(bottom)) - Math.round(y(top))), fill: colour
        });
    });
});

// Drawings
line(pane, 47, 228, 494, 228, '#3c9f45', 1.5);
line(pane, 523, 228, 1187, 227, '#3c9f45', 1.5);
label(pane, 508.5, 231, 'PDSH', 'label', '#3fae49');
line(pane, 580, 256.5, 794, 256.5, '#35a63f', 1.5);
line(pane, 817, 256.5, 1032, 255.5, '#35a63f', 1.5);
label(pane, 805.5, 259, 'PDH', 'label', '#3fae49');
line(pane, 722, 394.5, 895, 394.5, '#b5123d', 1.5);
line(pane, 414, 489.5, 782, 489.5, '#b5123d', 1.5);
line(pane, 805, 489.5, 1174, 489.5, '#b5123d', 1.5);
label(pane, 793, 492, 'PDL', 'label', '#c21743');
line(pane, 105, 207, 350, 178.5, '#222');
line(pane, 431, 169, 675, 141, '#222');
line(pane, 47, 142, 54, 140, '#222');
label(pane, 390, 180, 'TUESDAY', 'day').setAttribute('transform', 'rotate(-6 390 174)');
line(pane, 699, 205.5, 932, 178, '#222');
line(pane, 1036, 166, 1187, 148.5, '#222');
label(pane, 984, 177, 'WEDNESDAY', 'day').setAttribute('transform', 'rotate(-6 984 171)');

// News event
add(pane, 'circle', { cx: 871.5, cy: 617.5, r: 8, fill: '#fff', stroke: '#8a2a9e', 'stroke-width': 1.5 });
add(pane, 'path', { d: 'M874 612l-6 6h3l-2 5 6-6h-3z', fill: '#8a2a9e' });

// Time scale
[['15:00', 461.5], ['18:00', 533], ['21:00', 604], ['09:00', 889], ['12:00', 960], ['15:00', 1031.5], ['18:00', 1103], ['21:00', 1174]]
    .forEach(([text, x]) => label(pane, x, 644, text));
label(pane, 399, 644, '0');

function tag(x, width, text, fill, textX) {
    add(pane, 'rect', { x, y: 629, width, height: 20, fill });
    label(pane, textX, 644, text, 'tag', '#fff');
}
tag(49, 107, "Tue 24 Mar '26   00:00", '#000', 105);
tag(156, 243, "Tue 24 Mar '26   04:30", '#e21b4d', 212);
label(pane, 319, 644, "Tue 24 Mar '26   09:00", 'tag', '#fff');
label(pane, 383, 644, '0:00', 'tag', '#fff');
tag(617, 115, "Wed 25 Mar '26   00:00", '#000', 675);
tag(736, 116, "Wed 25 Mar '26   05:00", '#e21b4d', 794);

// Price tags
add(scale, 'rect', { x: 1188, y: 126, width: 46, height: 14, fill: '#2fc5c5' });
label(scale, 1213, 138, '1.16698');
add(scale, 'rect', { x: 1188, y: 204, width: 46, height: 14, fill: '#2fc5c5' });
label(scale, 1213, 215, '1.16451');
add(scale, 'rect', { x: 1188, y: 357, width: 46, height: 14, fill: '#000' });
label(scale, 1213, 368, '1.15967', 'now', '#fff');
```
